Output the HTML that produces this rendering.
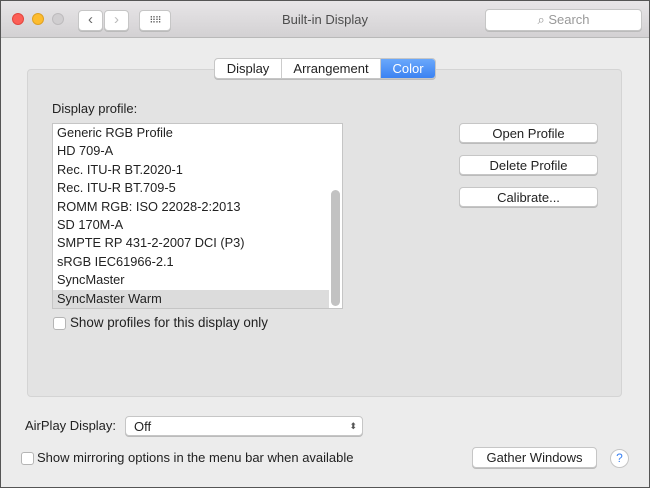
<!DOCTYPE html>
<html><head><style>
*{box-sizing:border-box;margin:0;padding:0}
body{width:650px;height:488px;overflow:hidden;background:#ececec;font-family:"Liberation Sans",sans-serif;font-size:13px;color:#222;position:relative}
.abs{position:absolute}
.tb{left:0;top:0;width:650px;height:38px;background:linear-gradient(#e8e6e8,#d3d1d3);border-bottom:1px solid #b9b9b9}
.dot{width:12px;height:12px;border-radius:50%;top:13px}
.btn{background:#fff;border:1px solid #c6c6c6;border-radius:4px;box-shadow:0 1px 0 #bbb;text-align:center;line-height:19px;font-size:13px}
.row{position:absolute;left:4px;height:18.4px;line-height:18.4px;font-size:12.8px}
.cb{width:13px;height:13px;background:#fff;border:1px solid #b5b5b5;border-radius:3px}
</style></head><body>
<div class="abs" style="left:0;top:0;width:650px;height:488px;border:1px solid #555;z-index:9;pointer-events:none"></div>
<div class="abs tb"></div>
<div class="abs dot" style="left:12px;background:#fc5f57;border:1px solid #e2463f"></div>
<div class="abs dot" style="left:32px;background:#fdbc2e;border:1px solid #dea123"></div>
<div class="abs dot" style="left:52px;background:#d0ced0;border:1px solid #bdbbbd"></div>
<div class="abs btn" style="left:78px;top:10px;width:25px;height:21px;font-size:15px;line-height:18px;color:#666">‹</div>
<div class="abs btn" style="left:104px;top:10px;width:25px;height:21px;font-size:15px;line-height:18px;color:#bbb">›</div>
<div class="abs btn" style="left:139px;top:10px;width:32px;height:21px;font-size:9px;line-height:18px;color:#555;letter-spacing:-1px">⠿⠿</div>
<div class="abs" style="left:0;width:650px;top:12px;text-align:center;font-size:13px;color:#4d4d4d">Built-in Display</div>
<div class="abs btn" style="left:485px;top:9px;width:157px;height:22px;color:#999;line-height:20px">⌕ Search</div>
<div class="abs" style="left:27px;top:69px;width:595px;height:328px;background:#e3e3e3;border:1px solid #d4d4d4;border-radius:4px"></div>
<div class="abs btn" style="left:214px;top:58px;width:222px;height:21px;border-radius:4px;overflow:hidden;display:flex;line-height:19px">
<div style="width:67px;border-right:1px solid #ccc">Display</div>
<div style="width:99px;border-right:1px solid #ccc">Arrangement</div>
<div style="flex:1;background:linear-gradient(#6aa8fb,#3b82f2);color:#fff">Color</div></div>
<div class="abs" style="left:52px;top:101px">Display profile:</div>
<div class="abs" style="left:52px;top:123px;width:291px;height:186px;background:#fff;border:1px solid #c5c5c5">
<div class="row" style="top:0">Generic RGB Profile</div>
<div class="row" style="top:18.4px">HD 709-A</div>
<div class="row" style="top:36.8px">Rec. ITU-R BT.2020-1</div>
<div class="row" style="top:55.2px">Rec. ITU-R BT.709-5</div>
<div class="row" style="top:73.6px">ROMM RGB: ISO 22028-2:2013</div>
<div class="row" style="top:92px">SD 170M-A</div>
<div class="row" style="top:110.4px">SMPTE RP 431-2-2007 DCI (P3)</div>
<div class="row" style="top:128.8px">sRGB IEC61966-2.1</div>
<div class="row" style="top:147.2px">SyncMaster</div>
<div class="abs" style="left:0;top:166px;width:276px;height:18.4px;background:#dcdcdc"></div>
<div class="row" style="top:166px">SyncMaster Warm</div>
<div class="abs" style="left:278px;top:66px;width:9px;height:116px;background:#c2c2c2;border-radius:5px"></div>
</div>
<div class="abs cb" style="left:53px;top:317px"></div>
<div class="abs" style="left:70px;top:315px;font-size:13.4px">Show profiles for this display only</div>
<div class="abs btn" style="left:459px;top:123px;width:139px;height:20px">Open Profile</div>
<div class="abs btn" style="left:459px;top:155px;width:139px;height:20px">Delete Profile</div>
<div class="abs btn" style="left:459px;top:187px;width:139px;height:20px">Calibrate...</div>
<div class="abs" style="left:25px;top:418px">AirPlay Display:</div>
<div class="abs btn" style="left:125px;top:416px;width:238px;height:20px;text-align:left;padding-left:8px">Off<span style="position:absolute;right:5px;top:0;font-size:9px;color:#555">⬍</span></div>
<div class="abs cb" style="left:21px;top:452px"></div>
<div class="abs" style="left:37px;top:450px">Show mirroring options in the menu bar when available</div>
<div class="abs btn" style="left:472px;top:447px;width:125px;height:21px">Gather Windows</div>
<div class="abs" style="left:610px;top:449px;width:19px;height:19px;border-radius:50%;background:#fff;border:1px solid #c5c5c5;text-align:center;line-height:17px;color:#3b82f2;font-size:12px">?</div>
</body></html>
